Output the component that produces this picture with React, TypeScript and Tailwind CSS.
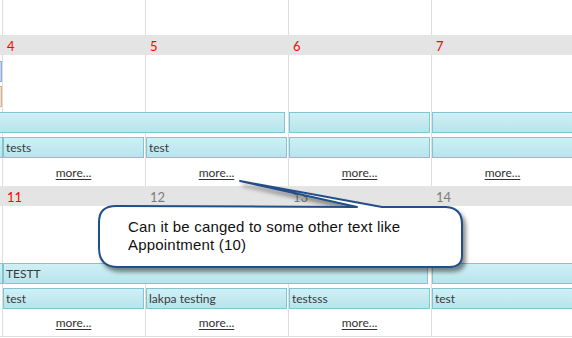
import React from "react";

const font = { fontFamily: "Lato, 'Open Sans', sans-serif" };

function Bar({ cls, text }: { cls: string; text?: string }) {
  return (
    <div
      className={`h-[21px] border border-[#80c6d2] bg-gradient-to-b from-[#cff0f5] to-[#b8e4ec] text-[12px] leading-[19px] pl-[2px] text-[#3a3a3a] overflow-hidden whitespace-nowrap ${cls}`}
    >
      {text}
    </div>
  );
}

function ColumnLines() {
  return (
    <>
      <div className="col-start-1 row-span-full" />
      <div className="col-start-2 row-span-full border-l border-[#dedede]" />
      <div className="col-start-3 row-span-full border-l border-[#dedede]" />
      <div className="col-start-4 row-span-full border-l border-[#dedede]" />
      <div className="col-start-5 row-span-full border-l border-[#dedede]" />
    </>
  );
}

function More({ cls }: { cls: string }) {
  return (
    <div className={`row-start-10 flex items-center justify-center pt-[1px] ${cls}`}>
      <span className="text-[12px] text-[#333] underline underline-offset-[2px]">more...</span>
    </div>
  );
}

export default function App() {
  return (
    <div className="relative w-[572px] h-[338px] overflow-hidden bg-white" style={font}>
      {/* partial previous week */}
      <div className="grid grid-cols-[2px_143px_143px_143px_143px] h-[35px]">
        <div className="col-start-1" />
        <div className="col-start-2 border-l border-[#dedede]" />
        <div className="col-start-3 border-l border-[#dedede]" />
        <div className="col-start-4 border-l border-[#dedede]" />
        <div className="col-start-5 border-l border-[#dedede]" />
      </div>

      {/* week 1 */}
      <div className="grid grid-cols-[2px_143px_143px_143px_143px] grid-rows-[20px_6px_21px_4px_21px_5px_21px_4px_21px_1fr] h-[151px]">
        <ColumnLines />
        <div className="col-start-1 col-end-6 row-start-1 bg-[#e4e4e4]" />
        <div className="col-start-2 row-start-1 pl-[5px] pt-px text-[13px] leading-[20px] text-[#ff0000]">4</div>
        <div className="col-start-3 row-start-1 pl-[5px] pt-px text-[13px] leading-[20px] text-[#ff0000]">5</div>
        <div className="col-start-4 row-start-1 pl-[5px] pt-px text-[13px] leading-[20px] text-[#ff0000]">6</div>
        <div className="col-start-5 row-start-1 pl-[5px] pt-px text-[13px] leading-[20px] text-[#ff0000]">7</div>

        <div className="col-start-1 row-start-3 h-[21px] border-y border-r border-[#8fabd8] bg-[#c4d4ee]" />
        <div className="col-start-1 row-start-5 h-[21px] border-y border-r border-[#d4b38e] bg-[#f1dec8]" />

        <Bar cls="col-start-1 col-end-4 row-start-7 mr-[3px] border-l-0" />
        <Bar cls="col-start-4 row-start-7 ml-px mr-px" />
        <Bar cls="col-start-5 row-start-7 ml-px" />

        <Bar cls="col-start-1 row-start-9 border-l-0" />
        <Bar cls="col-start-2 row-start-9 ml-px mr-px" text="tests" />
        <Bar cls="col-start-3 row-start-9 ml-px mr-px" text="test" />
        <Bar cls="col-start-4 row-start-9 ml-px mr-px" />
        <Bar cls="col-start-5 row-start-9 ml-px" />

        <More cls="col-start-2" />
        <More cls="col-start-3" />
        <More cls="col-start-4" />
        <More cls="col-start-5" />
      </div>

      {/* week 2 */}
      <div className="grid grid-cols-[2px_143px_143px_143px_143px] grid-rows-[20px_6px_21px_4px_21px_5px_21px_4px_21px_1fr] h-[151px] border-b border-[#dedede]">
        <ColumnLines />
        <div className="col-start-1 col-end-6 row-start-1 bg-[#e4e4e4]" />
        <div className="col-start-2 row-start-1 pl-[5px] pt-px text-[13px] leading-[20px] text-[#ff0000]">11</div>
        <div className="col-start-3 row-start-1 pl-[5px] pt-px text-[13px] leading-[20px] text-[#7c7c7c]">12</div>
        <div className="col-start-4 row-start-1 pl-[5px] pt-px text-[13px] leading-[20px] text-[#7c7c7c]">13</div>
        <div className="col-start-5 row-start-1 pl-[5px] pt-px text-[13px] leading-[20px] text-[#7c7c7c]">14</div>

        <Bar cls="col-start-1 row-start-7 border-l-0" />
        <Bar cls="col-start-2 col-end-5 row-start-7 ml-px mr-[3px]" text="TESTT" />
        <Bar cls="col-start-5 row-start-7 ml-px" />

        <Bar cls="col-start-2 row-start-9 ml-px mr-px" text="test" />
        <Bar cls="col-start-3 row-start-9 ml-px mr-px" text="lakpa testing" />
        <Bar cls="col-start-4 row-start-9 ml-px mr-px" text="testsss" />
        <Bar cls="col-start-5 row-start-9 ml-px" text="test" />

        <More cls="col-start-2" />
        <More cls="col-start-3" />
        <More cls="col-start-4" />
      </div>

      {/* callout annotation */}
      <svg className="absolute left-0 top-0 pointer-events-none" width="572" height="338" viewBox="0 0 572 338">
        <defs>
          <filter id="sh" x="-10%" y="-20%" width="130%" height="160%">
            <feDropShadow dx="3" dy="4" stdDeviation="2" floodColor="#000" floodOpacity="0.45" />
          </filter>
        </defs>
        <path
          d="M 357 207 L 240 181 L 382 207 L 446 207 Q 462 208 462 224 L 462 256 Q 462 267 449 267 L 118 267 Q 99 267 99 248 L 99 222 Q 99 206 116 206 Z"
          fill="#ffffff"
          stroke="#244f87"
          strokeWidth="2"
          strokeLinejoin="round"
          filter="url(#sh)"
        />
      </svg>
      <div
        className="absolute left-[128px] top-[218px] text-[15px] leading-[18px] tracking-[0.2px] text-[#111]"
        style={{ fontFamily: "'Liberation Sans', Arial, sans-serif" }}
      >
        Can it be canged to some other text like
        <br />
        Appointment (10)
      </div>
    </div>
  );
}
